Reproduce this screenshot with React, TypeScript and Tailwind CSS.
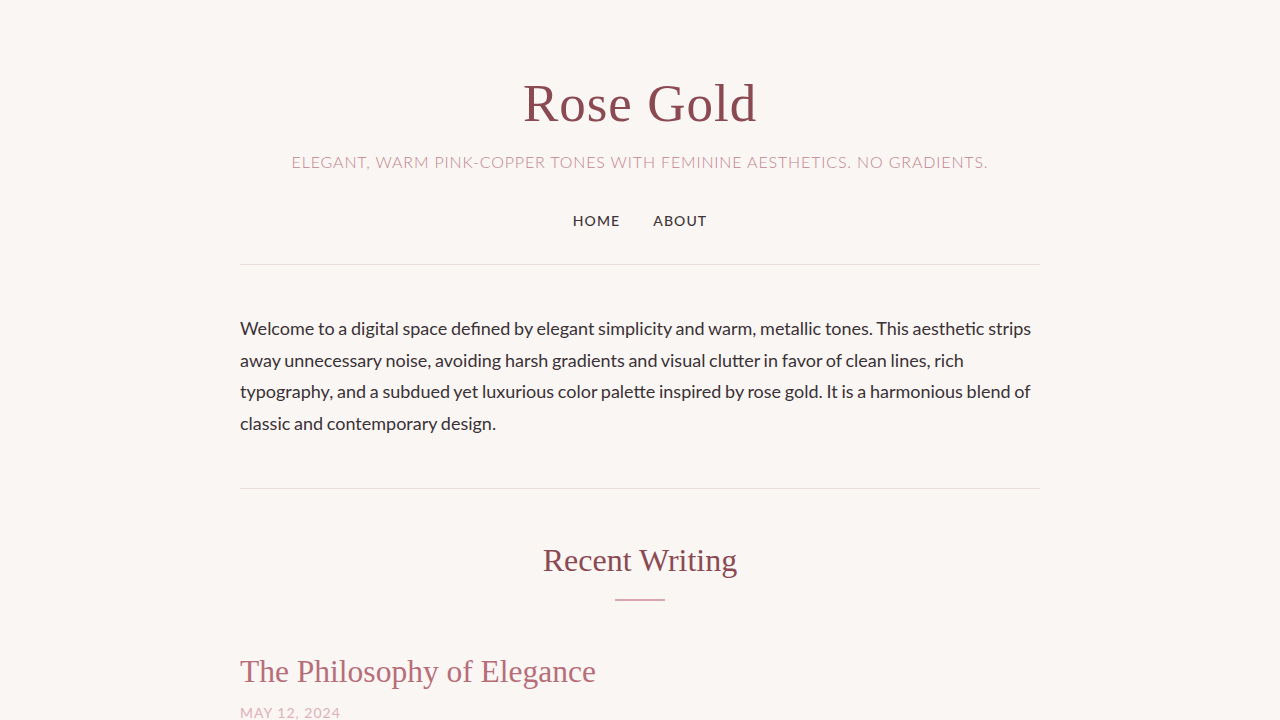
import React from "react";

export default function App() {
  return (
    <div className="min-h-screen bg-[#faf6f4] font-['Lato',sans-serif] text-[#3a3236]">
      <div className="mx-auto w-[800px]">
        <header className="flex flex-col items-center border-b border-[#eadcd8] pt-[68px] pb-[33px]">
          <h1 className="font-['Liberation_Serif',serif] text-[53px] leading-[70px] tracking-[1px] text-[#8b4a52]">
            Rose Gold
          </h1>
          <p className="mt-[12px] text-[16px] font-light uppercase leading-[24px] tracking-[0.85px] text-[#c2848c]">
            Elegant, warm pink-copper tones with feminine aesthetics. No gradients.
          </p>
          <nav className="mt-[37px] flex gap-[33px] text-[14px] font-medium uppercase leading-[20px] tracking-[1.1px] text-[#3d3438]">
            <a>Home</a>
            <a>About</a>
          </nav>
        </header>
        <section className="border-b border-[#eadcd8] pt-[48px] pb-[49px]">
          <p className="text-[18px] leading-[31.6px] text-[#3a3236] [word-spacing:-0.9px]">
            Welcome to a digital space defined by elegant simplicity and warm, metallic tones. This aesthetic strips away unnecessary noise, avoiding harsh gradients and visual clutter in favor of clean lines, rich typography, and a subdued yet luxurious color palette inspired by rose gold. It is a harmonious blend of classic and contemporary design.
          </p>
        </section>
        <section className="pt-[51px]">
          <div className="flex flex-col items-center">
            <h2 className="font-['Liberation_Serif',serif] text-[32px] leading-[40px] text-[#8b4a52]">
              Recent Writing
            </h2>
            <div className="mt-[19px] h-[2px] w-[50px] bg-[#dba7ae]" />
          </div>
          <article className="mt-[51px]">
            <h3 className="font-['Liberation_Serif',serif] text-[31.5px] leading-[40px] text-[#b76e79]">
              The Philosophy of Elegance
            </h3>
            <div className="mt-[11px] text-[14px] uppercase leading-[20px] tracking-[1px] text-[#e0b0b8]">
              May 12, 2024
            </div>
          </article>
        </section>
      </div>
    </div>
  );
}
